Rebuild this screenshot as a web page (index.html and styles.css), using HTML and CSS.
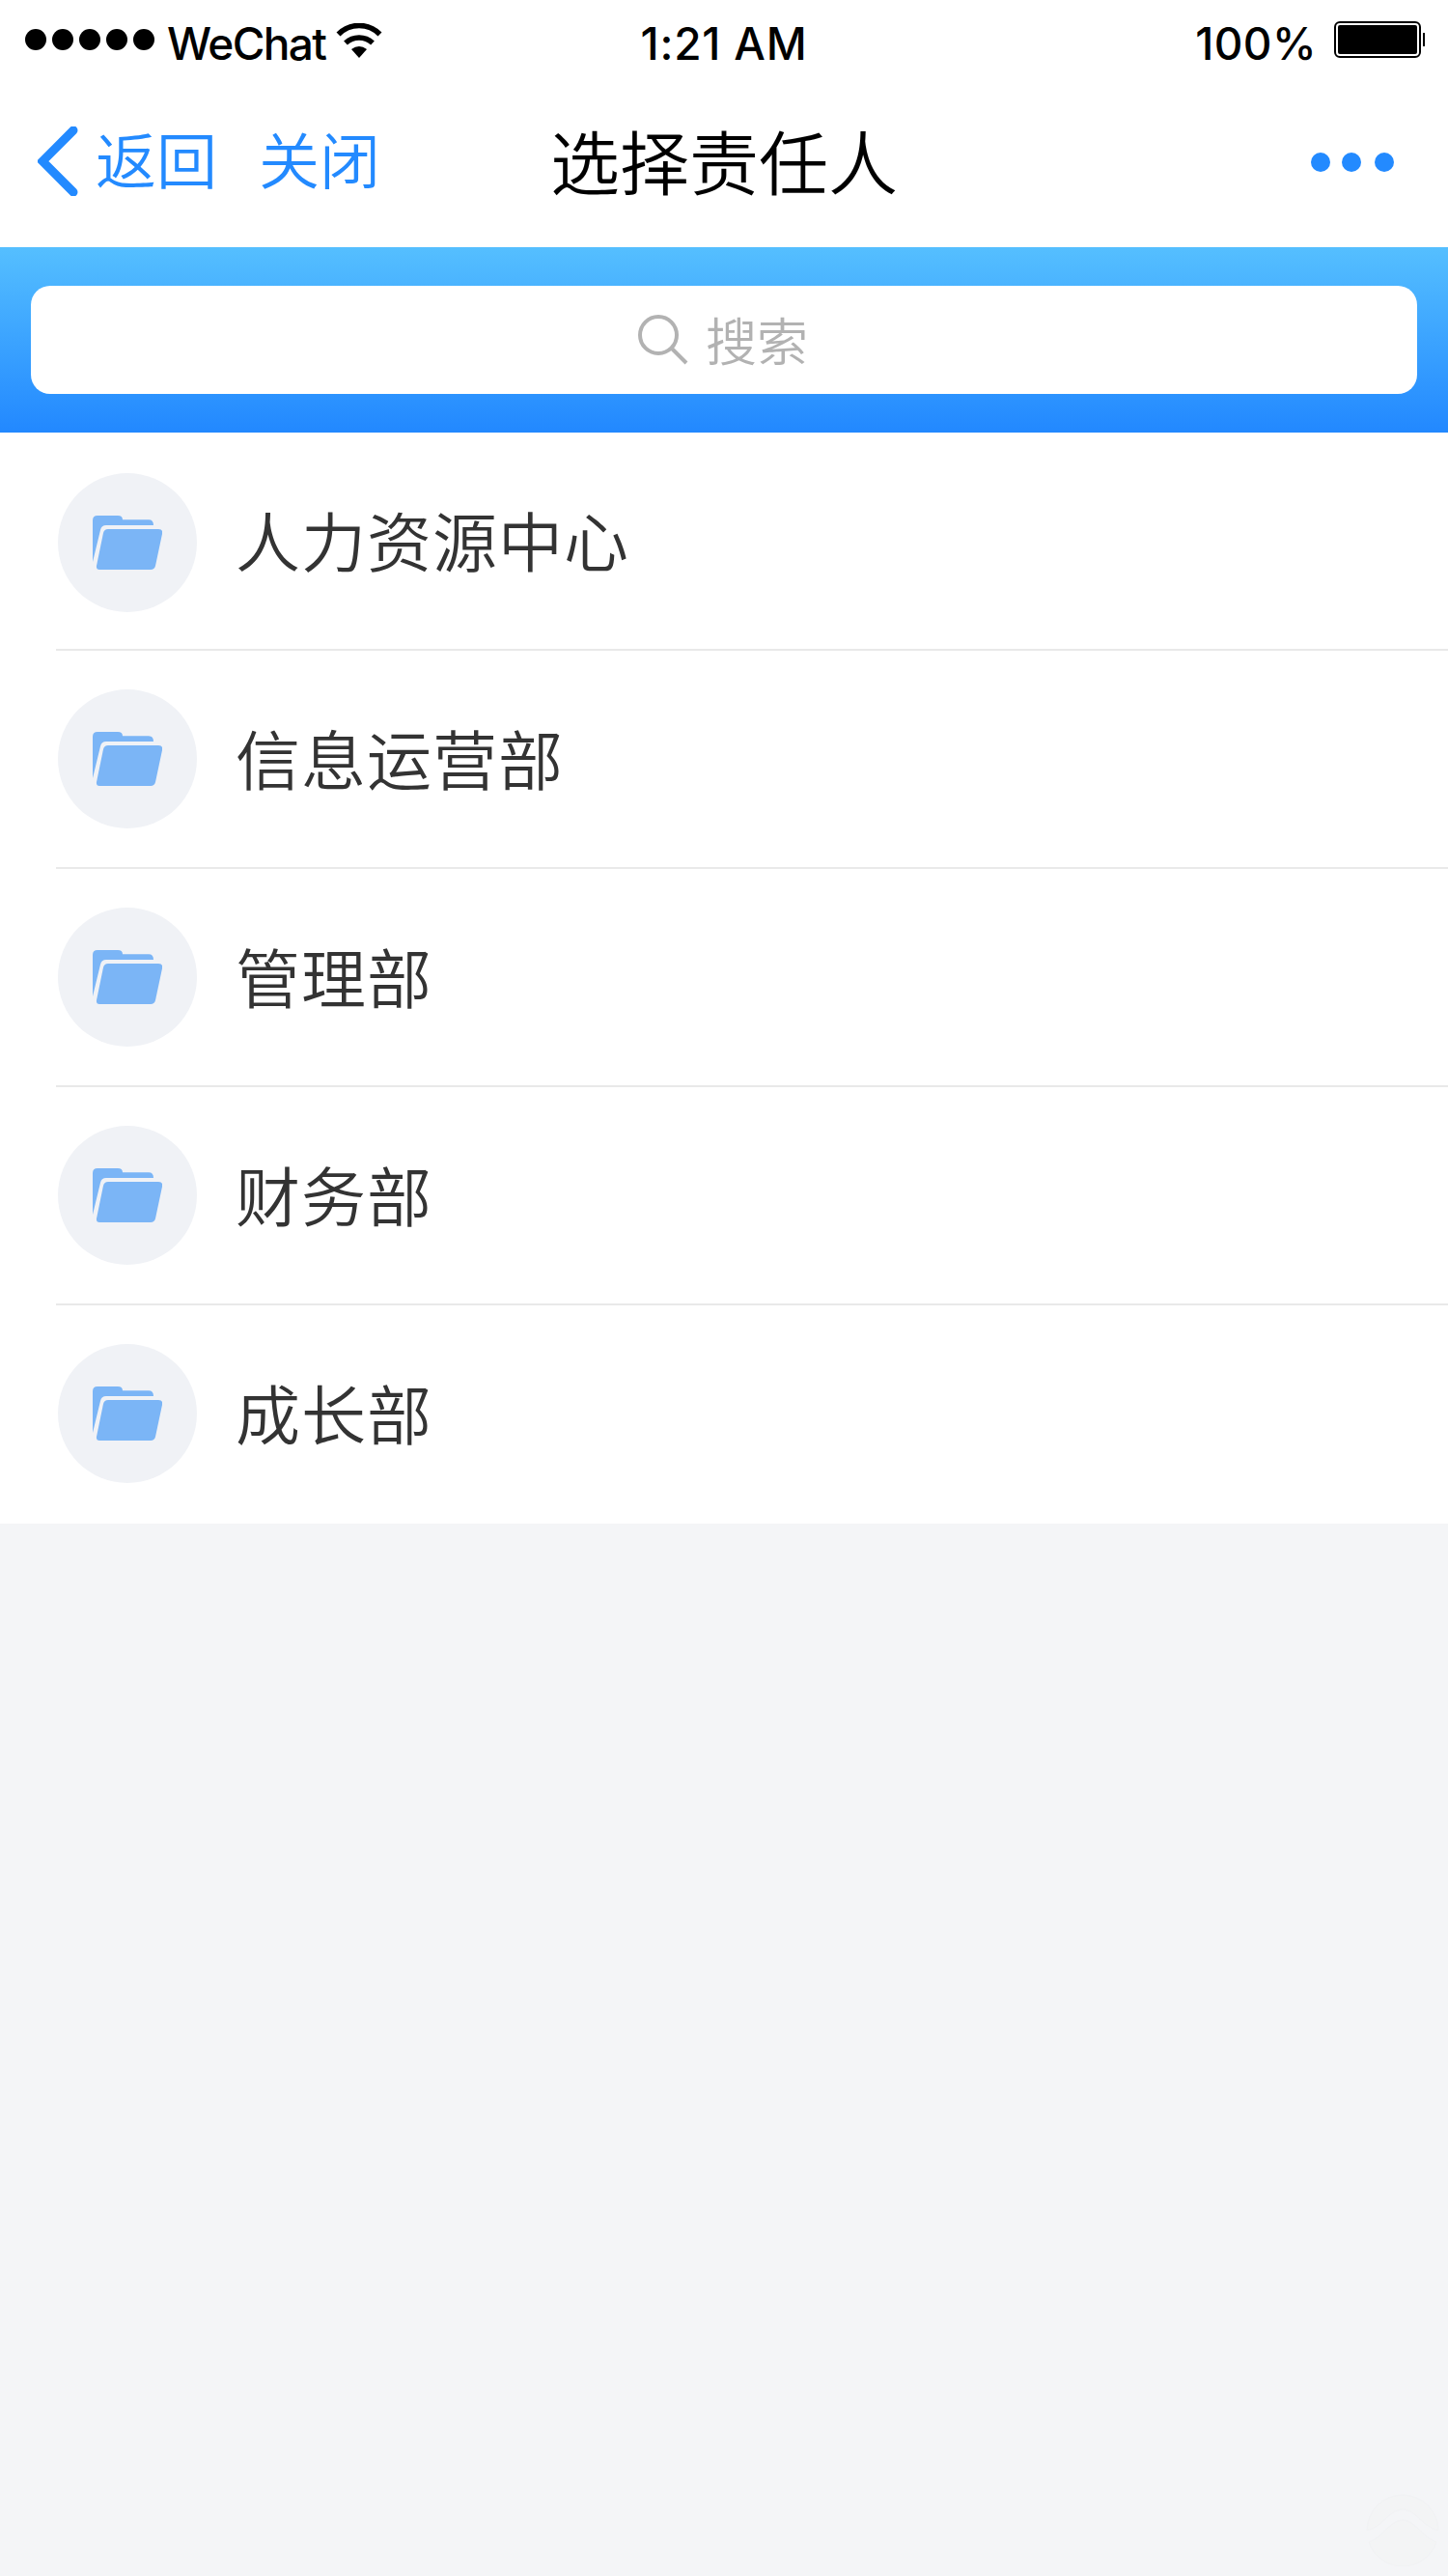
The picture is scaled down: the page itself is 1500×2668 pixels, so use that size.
FILE: index.html
```
<!DOCTYPE html>
<html lang="zh-CN">
<head>
    <meta charset="UTF-8">
    <meta name="viewport" content="width=device-width, initial-scale=1.0">
    <title>选择责任人</title>
    <link rel="stylesheet" href="styles.css">
</head>
<body>
    <svg class="symbols" width="0" height="0">
        <symbol id="folder" viewBox="0 0 72 56">
            <path d="M0 48V5Q0 0 5 0H26Q31 0 31 4.300H58Q63 4.300 63 10H14Q9 10 8 15Z"/>
            <path d="M16 14H68Q73 14 72 19L65 52Q64 56 60 56H7Q3.500 56 4 52L11 18Q12 14 16 14Z"/>
        </symbol>
    </svg>

    <div class="status-bar">
        <div class="status-left">
            <div class="signal"><i></i><i></i><i></i><i></i><i></i></div>
            <span class="carrier">WeChat</span>
            <svg class="wifi" viewBox="0 0 48 36" width="48" height="36">
                <path class="arc" d="M2.500 11.500A30 30 0 0 1 45.500 11.500"/>
                <path class="arc" d="M10 20.500A20.500 20.500 0 0 1 38 20.500"/>
                <path d="M16 27Q24 21 32 27L24 36Z"/>
            </svg>
        </div>
        <div class="time">1:21 AM</div>
        <div class="status-right">
            <span class="percent">100%</span>
            <svg class="battery" viewBox="0 0 94 38" width="94" height="38">
                <rect x="1" y="1" width="88" height="36" rx="5" fill="none" stroke="#000" stroke-width="2"/>
                <rect x="4" y="4" width="82" height="30" rx="2"/>
                <rect x="92" y="12" width="2" height="14"/>
            </svg>
        </div>
    </div>

    <div class="nav-bar">
        <div class="nav-left">
            <svg class="chevron" viewBox="0 0 42 72" width="42" height="72">
                <path d="M37 4L5 36L37 68"/>
            </svg>
            <span class="back">返回</span>
            <span class="close">关闭</span>
        </div>
        <div class="nav-title">选择责任人</div>
        <svg class="more" viewBox="0 0 86 20" width="86" height="20">
            <circle cx="10" cy="10" r="10"/>
            <circle cx="42" cy="10" r="10"/>
            <circle cx="76" cy="10" r="10"/>
        </svg>
    </div>

    <div class="search-bar">
        <div class="search-box">
            <svg class="search-icon" viewBox="0 0 52 52" width="52" height="52">
                <circle cx="21" cy="21" r="19"/>
                <path d="M34.500 34.500L50 50"/>
            </svg>
            <span class="search-text">搜索</span>
        </div>
    </div>

    <div class="list">
        <div class="list-item">
            <div class="avatar"><svg width="72" height="56"><use href="#folder"/></svg></div>
            <div class="name">人力资源中心</div>
        </div>
        <div class="list-item">
            <div class="avatar"><svg width="72" height="56"><use href="#folder"/></svg></div>
            <div class="name">信息运营部</div>
        </div>
        <div class="list-item">
            <div class="avatar"><svg width="72" height="56"><use href="#folder"/></svg></div>
            <div class="name">管理部</div>
        </div>
        <div class="list-item">
            <div class="avatar"><svg width="72" height="56"><use href="#folder"/></svg></div>
            <div class="name">财务部</div>
        </div>
        <div class="list-item">
            <div class="avatar"><svg width="72" height="56"><use href="#folder"/></svg></div>
            <div class="name">成长部</div>
        </div>
    </div>

    <svg class="float-mark" viewBox="0 0 76 76" width="76" height="76">
        <path d="M1 39A37 37 0 1 1 75 39C58 35 52 17 38 17C24 17 18 35 1 39Z"/>
        <path d="M3 51C20 44 25 28 38 28C51 28 56 44 73 51A37 37 0 0 1 3 51Z"/>
    </svg>
</body>
</html>
```
FILE: styles.css
```
* {
    box-sizing: border-box;
}
body {
    margin: 0;
    min-height: 2668px;
    background-color: #f4f5f7;
    font-family: "Noto Sans CJK SC", sans-serif;
    font-weight: 350;
    position: relative;
}
svg {
    display: block;
    flex: none;
}
.symbols {
    position: absolute;
}
.status-bar {
    display: grid;
    grid-template-columns: 1fr auto 1fr;
    height: 80px;
    padding: 0 24px;
    background-color: #fff;
    font-family: Inter, sans-serif;
    font-weight: 500;
    font-size: 46px;
    line-height: 90px;
}
.status-left, .status-right {
    display: flex;
}
.status-left {
    padding-left: 2px;
}
.status-right {
    justify-content: flex-end;
}
.signal {
    display: flex;
    gap: 6px;
    padding-top: 30px;
}
.signal i {
    width: 22px;
    height: 22px;
    border-radius: 50%;
    background-color: #000;
}
.carrier {
    width: 165px;
    margin-left: 13px;
    letter-spacing: -1.6px;
    white-space: nowrap;
}
.time {
    letter-spacing: 0.8px;
}
.wifi {
    margin: 24px 0 0 10px;
}
.wifi .arc {
    fill: none;
    stroke: #000;
    stroke-width: 5.5;
}
.percent {
    margin-right: 18px;
    letter-spacing: 0.4px;
}
.battery {
    margin-top: 22px;
}
.nav-bar {
    display: grid;
    grid-template-columns: 1fr auto 1fr;
    align-items: center;
    height: 176px;
    padding: 0 39px 8px;
    background-color: #fff;
    color: #238aff;
}
.nav-left {
    display: flex;
    align-items: center;
    font-size: 63px;
}
.chevron {
    margin-top: 6px;
}
.chevron path {
    fill: none;
    stroke: #238aff;
    stroke-width: 9;
    stroke-linecap: round;
}
.back {
    margin-left: 18px;
}
.close {
    margin-left: 43px;
}
.nav-left span {
    padding-bottom: 3px;
}
.nav-title {
    color: #000;
    font-size: 72px;
}
.more {
    justify-self: end;
    margin: 8px 17px 0 0;
    fill: #238aff;
}
.search-bar {
    height: 192px;
    padding: 40px 32px;
    background-image: linear-gradient(#55bfff, #2288ff);
}
.search-box {
    display: flex;
    align-items: center;
    justify-content: center;
    gap: 18px;
    height: 112px;
    padding-right: 2px;
    border-radius: 20px;
    background-color: #fff;
    color: #b2b2b2;
    font-size: 53px;
}
.search-icon {
    fill: none;
    stroke: #b2b2b2;
    stroke-width: 4;
}
.search-text {
    padding-bottom: 3px;
}
.list {
    background-color: #fff;
}
.list-item {
    display: flex;
    align-items: center;
    height: 226px;
    margin-left: 58px;
    padding-left: 2px;
    border-bottom: 2px solid #e9e9e9;
}
.list-item:last-child {
    border-bottom-color: #fff;
}
.avatar {
    width: 144px;
    height: 144px;
    padding: 44px 36px;
    border-radius: 50%;
    background-color: #f0f2f6;
}
.list-item:first-child .avatar {
    margin-top: 4px;
}
.avatar svg {
    fill: #7bb5f6;
    overflow: visible;
}
.name {
    margin-left: 40px;
    padding-bottom: 6px;
    color: #333;
    font-size: 67px;
    letter-spacing: 1px;
}
.float-mark {
    position: absolute;
    right: 9px;
    bottom: 10px;
    fill: #f3f4f5;
    stroke: #f1f2f4;
    stroke-width: 1;
}
```
